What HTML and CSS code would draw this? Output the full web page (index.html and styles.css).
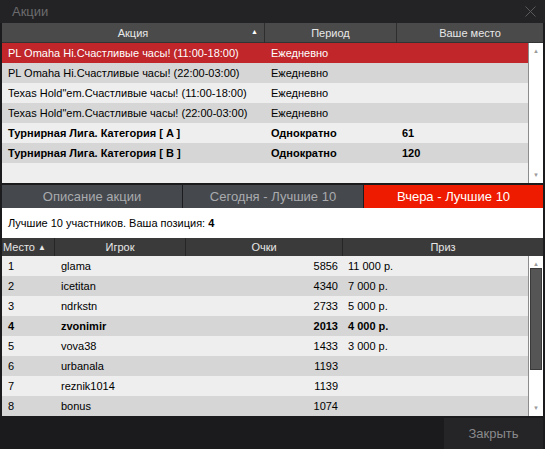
FILE: index.html
```html
<!DOCTYPE html>
<html>
<head>
<meta charset="utf-8">
<link rel="stylesheet" href="styles.css">
</head>
<body>
<div class="window">
  <div class="titlebar">
    <span class="title">Акции</span>
    <svg class="close" width="11" height="11" viewBox="0 0 11 11"><path d="M0.5 0.5L10.5 10.5M10.5 0.5L0.5 10.5" stroke="#5a5a5c" stroke-width="1"/></svg>
  </div>
  <div class="content">
    <div class="promo">
      <div class="phead">
        <div class="hcell">Акция<span class="sort">▲</span></div>
        <div class="hcell">Период</div>
        <div class="hcell">Ваше место</div>
      </div>
      <div class="pbody">
        <div class="plist">
          <div class="prow sel"><span class="c1">PL Omaha Hi.Счастливые часы! (11:00-18:00)</span><span class="c2">Ежедневно</span><span class="c3"></span></div>
          <div class="prow alt"><span class="c1">PL Omaha Hi.Счастливые часы! (22:00-03:00)</span><span class="c2">Ежедневно</span><span class="c3"></span></div>
          <div class="prow"><span class="c1">Texas Hold"em.Счастливые часы! (11:00-18:00)</span><span class="c2">Ежедневно</span><span class="c3"></span></div>
          <div class="prow alt"><span class="c1">Texas Hold"em.Счастливые часы! (22:00-03:00)</span><span class="c2">Ежедневно</span><span class="c3"></span></div>
          <div class="prow bold"><span class="c1">Турнирная Лига. Категория [ A ]</span><span class="c2">Однократно</span><span class="c3">61</span></div>
          <div class="prow alt bold"><span class="c1">Турнирная Лига. Категория [ B ]</span><span class="c2">Однократно</span><span class="c3">120</span></div>
          <div class="prow empty"></div>
        </div>
        <div class="scroll">
          <span class="arr">▲</span>
          <span class="track"></span>
          <span class="arr">▼</span>
        </div>
      </div>
    </div>
    <div class="tabs">
      <div class="tab">Описание акции</div>
      <div class="tab">Сегодня - Лучшие 10</div>
      <div class="tab active">Вчера - Лучшие 10</div>
    </div>
    <div class="info">Лучшие 10 участников. Ваша позиция: <b>4</b></div>
    <div class="lhead">
      <div class="lh first">Место <span class="sort2">▲</span></div>
      <div class="lh">Игрок</div>
      <div class="lh">Очки</div>
      <div class="lh">Приз</div>
    </div>
    <div class="lbody">
      <div class="llist">
        <div class="lrow"><span class="d1">1</span><span class="d2">glama</span><span class="d3">5856</span><span class="d4">11 000 р.</span></div>
        <div class="lrow alt"><span class="d1">2</span><span class="d2">icetitan</span><span class="d3">4340</span><span class="d4">7 000 р.</span></div>
        <div class="lrow"><span class="d1">3</span><span class="d2">ndrkstn</span><span class="d3">2733</span><span class="d4">5 000 р.</span></div>
        <div class="lrow alt bold"><span class="d1">4</span><span class="d2">zvonimir</span><span class="d3">2013</span><span class="d4">4 000 р.</span></div>
        <div class="lrow"><span class="d1">5</span><span class="d2">vova38</span><span class="d3">1433</span><span class="d4">3 000 р.</span></div>
        <div class="lrow alt"><span class="d1">6</span><span class="d2">urbanala</span><span class="d3">1193</span><span class="d4"></span></div>
        <div class="lrow"><span class="d1">7</span><span class="d2">reznik1014</span><span class="d3">1139</span><span class="d4"></span></div>
        <div class="lrow alt"><span class="d1">8</span><span class="d2">bonus</span><span class="d3">1074</span><span class="d4"></span></div>
      </div>
      <div class="scroll">
        <span class="arr">▲</span>
        <span class="track"><span class="thumb"></span></span>
        <span class="arr">▼</span>
      </div>
    </div>
    <div class="footer">
      <div class="btn">Закрыть</div>
    </div>
  </div>
</div>
</body>
</html>
```
FILE: styles.css
```css
html, body {
  margin: 0;
  padding: 0;
  background: #1c1c1e;
}
body {
  width: 545px;
  height: 449px;
  overflow: hidden;
  font-family: "Liberation Sans", Arial, sans-serif;
  font-size: 11px;
  color: #000;
}
.window {
  width: 545px;
  height: 449px;
  background: #1b1b1d;
}
.titlebar {
  height: 23px;
  background: #232325;
  display: flex;
  align-items: center;
  justify-content: space-between;
  padding: 0 9px 0 12px;
  box-sizing: border-box;
}
.title {
  color: #6c6c6e;
  font-size: 13px;
}
.close { display: block; }
.content {
  padding: 0 2px;
}
.phead {
  display: grid;
  grid-template-columns: 262px 131px 1fr;
  column-gap: 1px;
  background: #2e2e2e;
  height: 20px;
}
.hcell {
  background: #4a4a4a;
  color: #e8e8e8;
  display: flex;
  align-items: center;
  justify-content: center;
  position: relative;
  border-bottom: 1px solid #333;
}
.sort {
  position: absolute;
  right: 6px;
  top: 5px;
  font-size: 7px;
  color: #fff;
}
.pbody {
  display: flex;
  height: 140px;
}
.plist {
  flex: 1;
  background: #eeeeee;
}
.prow {
  display: grid;
  grid-template-columns: 263px 132px 1fr;
  height: 20px;
  align-items: center;
  background: #eeeeee;
}
.prow.alt { background: #d6d6d6; }
.prow.sel { background: #c0262a; color: #fff; }
.prow.bold { font-weight: bold; }
.prow.empty { background: #eeeeee; }
.c1 { padding-left: 6px; white-space: nowrap; }
.c2 { padding-left: 6px; }
.c3 { padding-left: 5px; }
.scroll {
  width: 15px;
  background: #ffffff;
  border-left: 1px solid #8c8c8c;
  box-sizing: border-box;
  display: flex;
  flex-direction: column;
  align-items: center;
}
.arr {
  font-size: 6px;
  color: #9a9a9a;
  height: 16px;
  line-height: 16px;
}
.track {
  flex: 1;
  width: 100%;
  display: flex;
  flex-direction: column;
}
.thumb {
  display: block;
  margin: -4px 1px 0 1px;
  height: 100px;
  background: #555555;
  border: 1px solid #3a3a3a;
}
.tabs {
  margin-top: 2px;
  display: grid;
  grid-template-columns: 180px 180px 1fr;
  column-gap: 1px;
  background: #1c1c1e;
  height: 23px;
}
.tab {
  background: #45484d;
  color: #a9abae;
  font-size: 13px;
  display: flex;
  align-items: center;
  justify-content: center;
}
.tab.active {
  background: #ee1b00;
  color: #ffffff;
}
.info {
  background: #ffffff;
  height: 30px;
  display: flex;
  align-items: center;
  padding-left: 6px;
  white-space: pre;
}
.lhead {
  display: grid;
  grid-template-columns: 52px 130px 156px 1fr;
  column-gap: 1px;
  background: #262626;
  height: 18px;
}
.lh {
  background: #3a3a3a;
  color: #e6e6e6;
  display: flex;
  align-items: center;
  justify-content: center;
}
.lh.first {
  justify-content: flex-start;
  padding-left: 1px;
}
.sort2 { font-size: 8px; margin-left: 3px; }
.lbody {
  display: flex;
  height: 160px;
}
.llist { flex: 1; }
.lrow {
  display: grid;
  grid-template-columns: 53px 131px 157px 1fr;
  height: 20px;
  align-items: center;
  background: #eeeeee;
}
.lrow.alt { background: #d6d6d6; }
.lrow.bold { font-weight: bold; }
.d1 { padding-left: 6px; }
.d2 { padding-left: 6px; }
.d3 { text-align: right; padding-right: 5px; }
.d4 { padding-left: 5px; }
.footer {
  display: flex;
  justify-content: flex-end;
  padding-top: 2px;
}
.btn {
  width: 99px;
  height: 31px;
  background: #252527;
  color: #8a8a8c;
  font-size: 13px;
  display: flex;
  align-items: center;
  justify-content: center;
}
```
